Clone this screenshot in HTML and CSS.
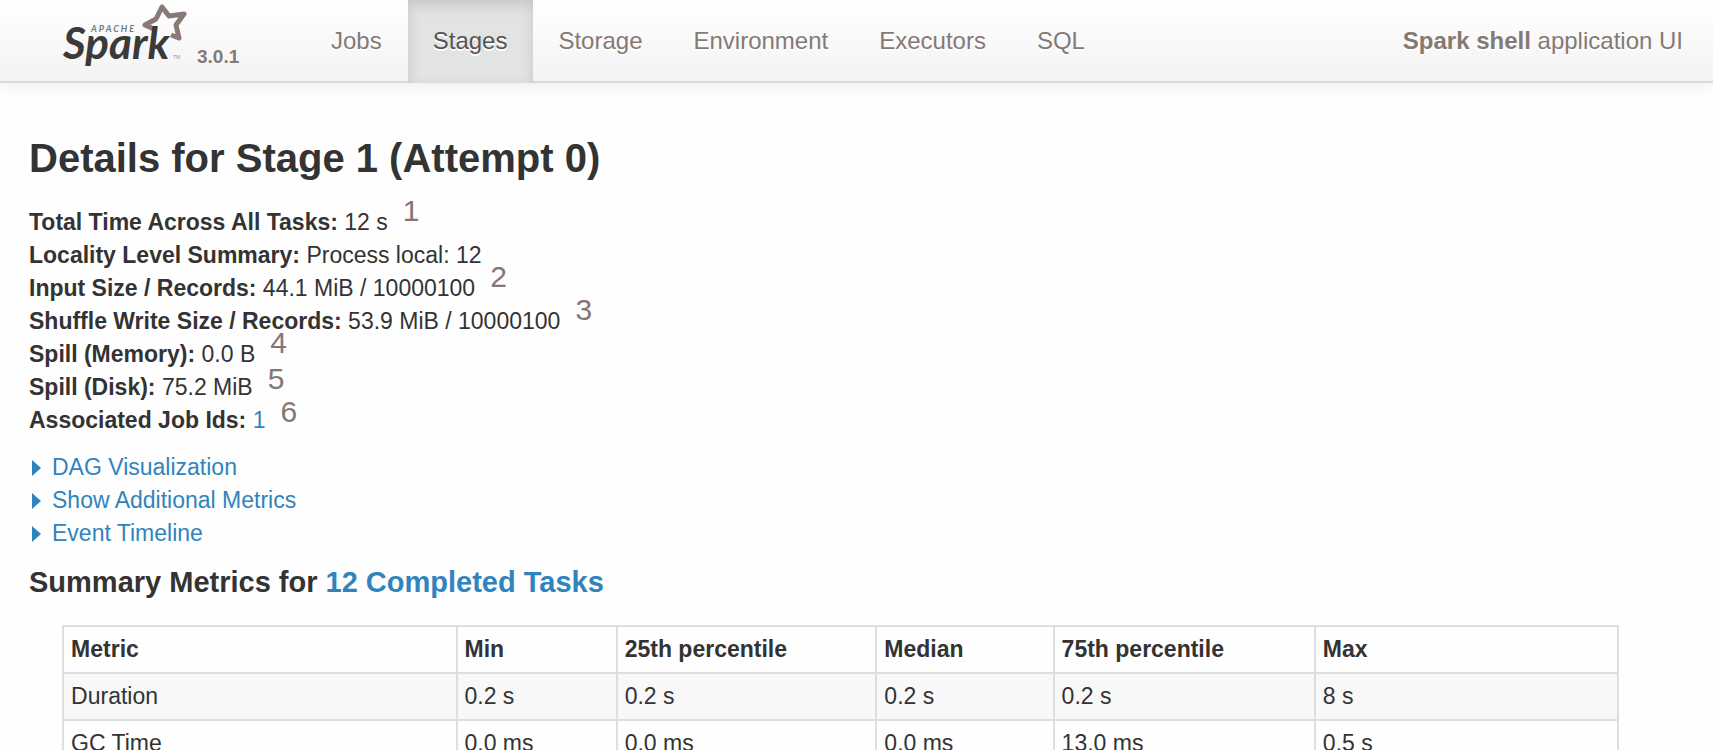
FILE: index.html
```html
<!DOCTYPE html>
<html lang="en">
<head>
<meta charset="utf-8">
<title>Spark shell - Details for Stage 1 (Attempt 0)</title>
<link rel="stylesheet" href="styles.css">
</head>
<body>
<header class="navbar">
  <a class="brand" href="#">
    <svg class="logo" width="128" height="72" viewBox="60 0 128 72" role="img" aria-label="Apache Spark">
      <path class="logo-star" d="M171 35 L179 38 L176 25 L184 14 L169 16 L162 7 L156 19 L145 25 L156 30"/>
      <text class="logo-apache" x="91" y="32">APACHE</text>
      <text class="logo-word" x="63" y="59">Spark</text>
      <text class="logo-tm" x="173" y="59">TM</text>
    </svg>
    <span class="version">3.0.1</span>
  </a>
  <nav class="tabs">
    <a class="tab" href="#">Jobs</a>
    <a class="tab active" href="#">Stages</a>
    <a class="tab" href="#">Storage</a>
    <a class="tab" href="#">Environment</a>
    <a class="tab" href="#">Executors</a>
    <a class="tab" href="#">SQL</a>
  </nav>
  <p class="app-name"><strong>Spark shell</strong> application UI</p>
</header>
<main class="content">
  <h1 class="title">Details for Stage 1 (Attempt 0)</h1>
  <ul class="summary">
    <li><strong>Total Time Across All Tasks:</strong> 12 s<span class="note">1</span></li>
    <li><strong>Locality Level Summary:</strong> Process local: 12</li>
    <li><strong>Input Size / Records:</strong> 44.1 MiB / 10000100<span class="note">2</span></li>
    <li><strong>Shuffle Write Size / Records:</strong> 53.9 MiB / 10000100<span class="note">3</span></li>
    <li><strong>Spill (Memory):</strong> 0.0 B<span class="note">4</span></li>
    <li><strong>Spill (Disk):</strong> 75.2 MiB<span class="note note-low">5</span></li>
    <li><strong>Associated Job Ids:</strong> <a href="#">1</a><span class="note note-low">6</span></li>
  </ul>
  <ul class="toggles">
    <li><a class="toggle" href="#"><span class="arrow"></span>DAG Visualization</a></li>
    <li><a class="toggle" href="#"><span class="arrow"></span>Show Additional Metrics</a></li>
    <li><a class="toggle" href="#"><span class="arrow"></span>Event Timeline</a></li>
  </ul>
  <h2 class="subtitle">Summary Metrics for <a href="#">12 Completed Tasks</a></h2>
  <div class="table-wrap">
    <table class="metrics">
      <colgroup>
        <col class="col-metric"><col class="col-min"><col class="col-p25"><col class="col-median"><col class="col-p75"><col>
      </colgroup>
      <thead>
        <tr><th>Metric</th><th>Min</th><th>25th percentile</th><th>Median</th><th>75th percentile</th><th>Max</th></tr>
      </thead>
      <tbody>
        <tr><td>Duration</td><td>0.2 s</td><td>0.2 s</td><td>0.2 s</td><td>0.2 s</td><td>8 s</td></tr>
        <tr><td>GC Time</td><td>0.0 ms</td><td>0.0 ms</td><td>0.0 ms</td><td>13.0 ms</td><td>0.5 s</td></tr>
      </tbody>
    </table>
  </div>
</main>
</body>
</html>
```
FILE: styles.css
```css
* { box-sizing: border-box; }

html { overflow: hidden; }

body {
  margin: 0;
  background: #fefefe;
  color: #333;
  font: 23px/33px "Liberation Sans", Arial, Helvetica, sans-serif;
}

a { color: #2f84bd; text-decoration: none; }

ul { list-style: none; margin: 0; padding: 0; }

.navbar {
  display: flex;
  height: 83px;
  padding: 0 30px 0 60px;
  background: linear-gradient(#fff, #f3f3f3);
  border-bottom: 2px solid #d8d9d9;
  box-shadow: 0 2px 16px rgba(0, 0, 0, 0.08);
  font-size: 24px;
  line-height: 81px;
}

.brand {
  display: flex;
  align-items: flex-start;
  gap: 9px;
  width: 246px;
}

.logo { display: block; }

.logo-word {
  fill: #3a3a3a;
  font: italic 700 44px Lato, sans-serif;
}

.logo-apache {
  fill: #777;
  font: italic 700 9px Lato, sans-serif;
  letter-spacing: 2px;
}

.logo-tm {
  fill: #999;
  font: 5px "Liberation Sans", sans-serif;
}

.logo-star {
  fill: none;
  stroke: #897a77;
  stroke-width: 5;
  stroke-linejoin: round;
}

.version {
  padding-top: 47px;
  color: #857976;
  font-size: 19px;
  font-weight: bold;
  line-height: 20px;
}

.tabs { display: flex; }

.tab {
  height: 83px;
  padding: 0 26px 0 25px;
  color: #857976;
  text-shadow: 0 2px 0 #fff;
}

.tab.active {
  background: #e2e4e3;
  box-shadow: inset 0 5px 13px rgba(0, 0, 0, 0.13);
  color: #555;
}

.app-name {
  margin: 0 0 0 auto;
  color: #857976;
  text-shadow: 0 2px 0 #fff;
}

.content { padding: 50px 29px 0; }

.title {
  margin: 0 0 23px;
  font-size: 40px;
  line-height: 50px;
}

.summary { margin-bottom: 14px; }

.summary li { position: relative; }

.note {
  position: absolute;
  top: -12px;
  margin-left: 15px;
  color: #857673;
  font-size: 30px;
}

.note-low { top: -9px; }

.toggle {
  display: inline-flex;
  align-items: center;
  gap: 11px;
}

.arrow {
  margin-left: 3px;
  border-left: 9px solid #2f84bd;
  border-top: 8px solid transparent;
  border-bottom: 8px solid transparent;
}

.toggles li { height: 33px; }

.subtitle {
  margin: 16px 0 26px;
  font-size: 29px;
  line-height: 33px;
}

.table-wrap { padding-left: 2%; }

.metrics {
  width: 96%;
  table-layout: fixed;
  border-collapse: collapse;
}

.metrics th,
.metrics td {
  height: 47px;
  padding: 6px 7px;
  border: 2px solid #dedede;
  text-align: left;
}

.metrics tbody tr:nth-child(odd) { background: #f8f8f8; }

.col-metric { width: 25.3%; }
.col-min { width: 10.3%; }
.col-p25 { width: 16.7%; }
.col-median { width: 11.4%; }
.col-p75 { width: 16.8%; }
```
